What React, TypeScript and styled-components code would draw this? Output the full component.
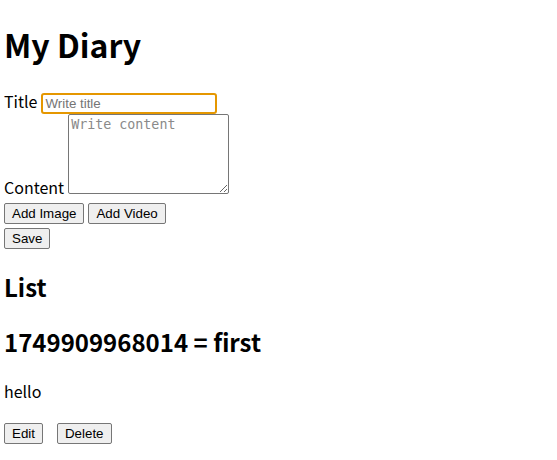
import React from "react";
import styled, { createGlobalStyle } from "styled-components";

const Global = createGlobalStyle`
  body {
    margin: 0 4px;
    font-family: "Noto Sans CJK KR", "Noto Sans", sans-serif;
    color: #000;
    background: #fff;
  }
`;

const Title = styled.h1`
  font-size: 32px;
  font-weight: 700;
  margin: 21.44px 0;
`;

const SubTitle = styled.h2`
  font-size: 24px;
  font-weight: 700;
  margin: 19.92px 0;
`;

const Row = styled.div``;

const Label = styled.label`
  font-size: 16px;
`;

const TextInput = styled.input`
  font-family: "Liberation Sans", Arial, sans-serif;
  font-size: 13.33px;
  width: 176px;
  padding: 1px 2px;
  margin: 0 0 0 4px;
  border: 2px solid #e59700;
  border-radius: 3px;
  outline: none;
  box-sizing: border-box;
  height: 21px;
  vertical-align: baseline;
  &::placeholder { color: #757575; }
`;

const TextArea = styled.textarea`
  font-family: "DejaVu Sans Mono", monospace;
  font-size: 13.33px;
  width: 161px;
  height: 80px;
  box-sizing: border-box;
  margin: 0 0 0 4px;
  border: 1px solid #767676;
  border-radius: 2px;
  padding: 2px;
  &::placeholder { color: #8a8a8a; }
`;

const Button = styled.button<{ $gap?: number }>`
  font-family: "Liberation Sans", Arial, sans-serif;
  font-size: 13.33px;
  padding: 2px 7px;
  margin: 0 ${(p) => p.$gap ?? 0}px 0 0;
  background: #efefef;
  border: 1px solid #767676;
  border-radius: 2px;
  color: #000;
`;

const Text = styled.p`
  font-size: 16px;
  margin: 16px 0;
`;

export default function App() {
  return (
    <>
      <Global />
      <Title>My Diary</Title>
      <Row>
        <Label>Title</Label>
        <TextInput placeholder="Write title" />
      </Row>
      <Row>
        <Label>Content</Label>
        <TextArea placeholder="Write content" />
      </Row>
      <Row>
        <Button $gap={4}>Add Image</Button>
        <Button>Add Video</Button>
      </Row>
      <Row>
        <Button>Save</Button>
      </Row>
      <SubTitle>List</SubTitle>
      <div>
        <SubTitle>1749909968014 = first</SubTitle>
        <Text>hello</Text>
        <Button $gap={14}>Edit</Button>
        <Button>Delete</Button>
      </div>
    </>
  );
}
